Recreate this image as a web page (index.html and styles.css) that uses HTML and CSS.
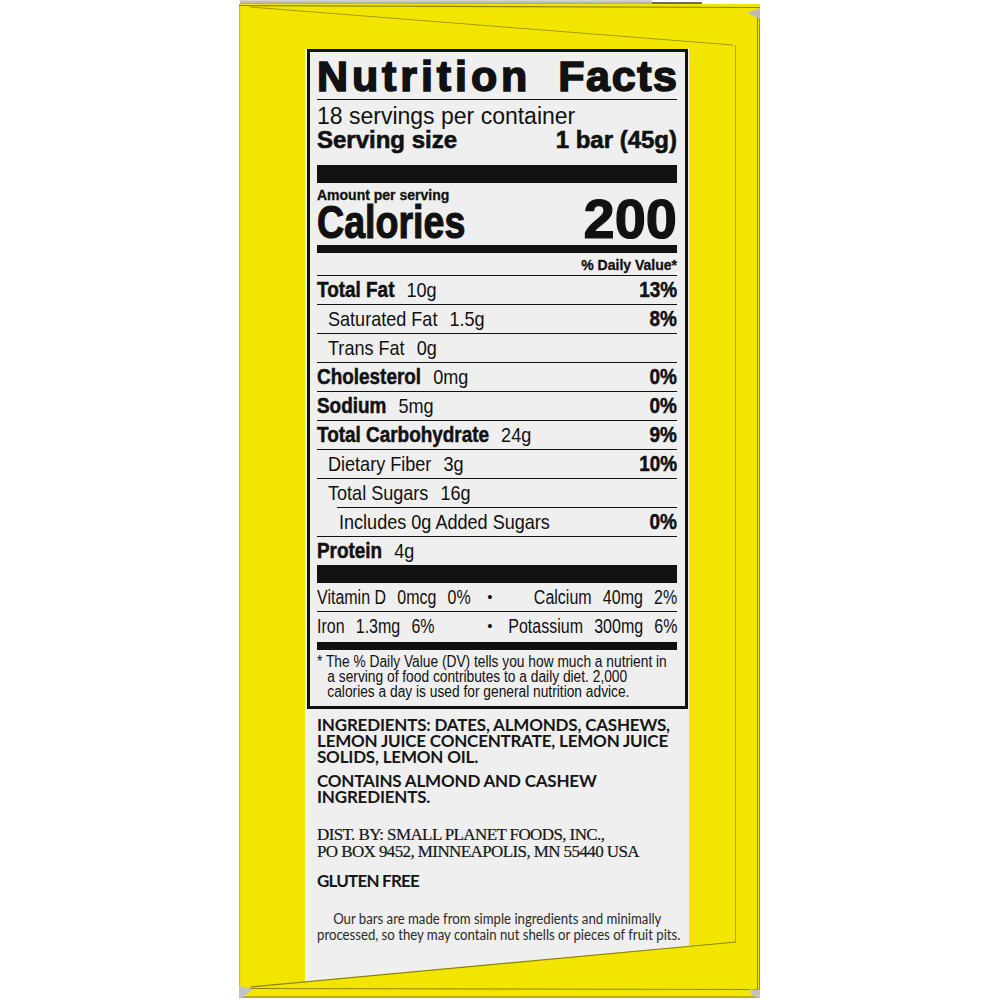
FILE: index.html
```html
<!DOCTYPE html>
<html>
<head>
<meta charset="utf-8">
<link rel="stylesheet" href="styles.css">
</head>
<body>
<div class="stage">
  <div class="lid"><span class="lid-light"></span><span class="lid-dark"></span></div>
  <div class="package">
    <div class="panel">
      <div class="nf">
        <div class="nf-title"><span class="w1">Nutrition</span><span class="w2">Facts</span></div>
        <div class="nf-serv">
          <div class="servings">18 servings per container</div>
          <div class="serving-size"><span>Serving size</span><span>1 bar (45g)</span></div>
        </div>
        <div class="nf-cal">
          <div class="amount">Amount per serving</div>
          <div class="cal-row"><span class="cal-label">Calories</span><span class="cal-num">200</span></div>
        </div>
        <div class="dv-head">% Daily Value*</div>
        <div class="row"><span class="c"><b>Total Fat</b><span class="amt">10g</span></span><b class="c r">13%</b></div>
        <div class="row ind1"><span class="c">Saturated Fat<span class="amt">1.5g</span></span><b class="c r">8%</b></div>
        <div class="row ind1"><span class="c">Trans Fat<span class="amt">0g</span></span></div>
        <div class="row"><span class="c"><b>Cholesterol</b><span class="amt">0mg</span></span><b class="c r">0%</b></div>
        <div class="row"><span class="c"><b>Sodium</b><span class="amt">5mg</span></span><b class="c r">0%</b></div>
        <div class="row"><span class="c"><b>Total Carbohydrate</b><span class="amt">24g</span></span><b class="c r">9%</b></div>
        <div class="row ind1"><span class="c">Dietary Fiber<span class="amt">3g</span></span><b class="c r">10%</b></div>
        <div class="row ind1 sugars"><span class="c">Total Sugars<span class="amt">16g</span></span></div>
        <div class="row ind2"><span class="c">Includes 0g Added Sugars</span><b class="c r">0%</b></div>
        <div class="row protein"><span class="c"><b>Protein</b><span class="amt">4g</span></span></div>
        <div class="bar-thick"></div>
        <div class="vit-row"><div class="cell"><span class="cv">Vitamin D<span class="amt">0mcg</span><span class="amt">0%</span></span></div><span class="dot">•</span><div class="cell vit-r"><span class="cv r">Calcium<span class="amt">40mg</span><span class="amt">2%</span></span></div></div>
        <div class="vit-row last-vit"><div class="cell"><span class="cv">Iron<span class="amt">1.3mg</span><span class="amt">6%</span></span></div><span class="dot">•</span><div class="cell vit-r"><span class="cv r">Potassium<span class="amt">300mg</span><span class="amt">6%</span></span></div></div>
        <div class="bar-mid"></div>
        <div class="foot">* The % Daily Value (DV) tells you how much a nutrient in<br>a serving of food contributes to a daily diet. 2,000<br>calories a day is used for general nutrition advice.</div>
      </div>
      <div class="below">
        <p class="ingr">INGREDIENTS: DATES, ALMONDS, CASHEWS,<br>LEMON JUICE CONCENTRATE, LEMON JUICE<br>SOLIDS, LEMON OIL.</p>
        <p class="ingr contains">CONTAINS ALMOND AND CASHEW<br>INGREDIENTS.</p>
        <p class="dist">DIST. BY: SMALL PLANET FOODS, INC.,<br>PO BOX 9452, MINNEAPOLIS, MN 55440 USA</p>
        <p class="ingr gf">GLUTEN FREE</p>
        <p class="ours">Our bars are made from simple ingredients and minimally<br>processed, so they may contain nut shells or pieces of fruit pits.</p>
      </div>
    </div>
    <svg class="folds" width="521" height="994" viewBox="0 0 521 994">
      <line x1="0.5" y1="0" x2="0.5" y2="994" stroke="#cfc300" stroke-width="1.5"/>
      <line x1="0" y1="1.5" x2="521" y2="3.5" stroke="#8d8500" stroke-width="1.2"/>
      <line x1="11" y1="3" x2="494" y2="41" stroke="#a39a00" stroke-width="1"/>
      <line x1="496.5" y1="41" x2="496.5" y2="938" stroke="#b4aa00" stroke-width="1"/>
      <line x1="11" y1="983" x2="497" y2="938" stroke="#8d8500" stroke-width="1.2"/>
      <line x1="4" y1="984.5" x2="518" y2="985.5" stroke="#8d8500" stroke-width="1"/>
      <line x1="2" y1="993" x2="519" y2="993" stroke="#a79d00" stroke-width="1.5"/>
      <line x1="518.5" y1="8" x2="518.5" y2="993" stroke="#8c8400" stroke-width="1"/>
      <line x1="520.5" y1="8" x2="520.5" y2="993" stroke="#c07a30" stroke-width="1"/>
      <polygon points="0,982 14,985 5,993 0,993" fill="#c3c3c3"/>
      <polygon points="510,985 521,986 521,994 514,992" fill="#c3c3c3"/>
      <polygon points="508,9 521,4 521,15" fill="#bcbcbc"/>
    </svg>
  </div>
</div>
</body>
</html>
```
FILE: styles.css
```css
* { box-sizing: border-box; }
body { margin: 0; background: #fff; }
.stage { width: 1000px; height: 1000px; overflow: hidden; background: #fff; }

.lid { margin-left: 240px; width: 462px; height: 4px; display: flex; }
.lid-light { flex: 0 0 412px; background: linear-gradient(#dcdad4, #a7a39a); }
.lid-dark { flex: 1; background: linear-gradient(transparent 55%, #6e6a60 55%); }

.package {
  position: relative;
  margin-left: 239px;
  width: 521px;
  height: 994px;
  background: #f2e600;
  padding: 45px 0 0 66px;
}
.folds { position: absolute; left: 0; top: 0; pointer-events: none; }

.panel {
  width: 384px;
  height: 933px;
  background: #efefef;
  clip-path: polygon(0 0, 100% 0, 100% 897px, 0 100%);
  padding: 0 1px 0 2px;
}

.nf {
  border: 3px solid #111;
  padding: 0 8px 0 7px;
  color: #111;
  font-family: "Liberation Sans", Arial, sans-serif;
}
.nf-title {
  display: flex;
  justify-content: space-between;
  font: bold 43px/45px "Liberation Sans", Arial, sans-serif;
  -webkit-text-stroke: 1.6px #111;
  padding-top: 2px;
  border-bottom: 1px solid #111;
}
.w1 { letter-spacing: 3.9px; }
.w2 { letter-spacing: 1.6px; margin-right: -1.6px; }

.nf-serv { padding: 4px 0 14px; border-bottom: 18px solid #111; }
.servings { font: 23px/24px "Liberation Sans", Arial, sans-serif; }
.serving-size {
  display: flex;
  justify-content: space-between;
  font: bold 24px/23px "Liberation Sans", Arial, sans-serif;
  -webkit-text-stroke: 0.6px #111;
}

.nf-cal { padding: 4px 0 7px; border-bottom: 8px solid #111; }
.amount { font: bold 14px/16px "Liberation Sans", Arial, sans-serif; -webkit-text-stroke: 0.3px #111; }
.cal-row { display: flex; justify-content: space-between; align-items: baseline; line-height: 32px; }
.cal-label {
  display: inline-block;
  font: bold 47px/32px "Liberation Sans", Arial, sans-serif;
  -webkit-text-stroke: 1.2px #111;
  transform: scaleX(0.8);
  transform-origin: left center;
}
.cal-num { font: bold 56px/32px "Liberation Sans", Arial, sans-serif; -webkit-text-stroke: 1.2px #111; }

.dv-head {
  text-align: right;
  font: bold 14px/20px "Liberation Sans", Arial, sans-serif;
  -webkit-text-stroke: 0.3px #111;
  padding-top: 2px;
  border-bottom: 1px solid #111;
}

.row {
  display: flex;
  justify-content: space-between;
  height: 29px;
  border-bottom: 1px solid #111;
  font: 21px/28px "Liberation Sans", Arial, sans-serif;
  white-space: nowrap;
}
.c { display: inline-block; transform: scaleX(0.86); transform-origin: left center; }
.c.r { transform-origin: right center; }
.row b { font-weight: bold; font-size: 22px; -webkit-text-stroke: 0.5px #111; }
.amt { margin-left: 14px; }
.ind1 { padding-left: 11px; }
.ind2 { padding-left: 22px; }
.sugars {
  border-bottom: none;
  background: linear-gradient(#111, #111) right bottom / calc(100% - 20px) 1px no-repeat;
}
.protein { border-bottom: none; height: 28px; }
.bar-thick { height: 18px; background: #111; }

.vit-row {
  display: grid;
  grid-template-columns: 167px 12px 1fr;
  height: 29px;
  border-bottom: 1px solid #111;
  font: 20px/28px "Liberation Sans", Arial, sans-serif;
  white-space: nowrap;
}
.vit-row.last-vit { border-bottom: none; height: 30px; }
.cell { display: flex; min-width: 0; }
.vit-r { justify-content: flex-end; }
.cv { display: inline-block; flex: none; transform: scaleX(0.8); transform-origin: left center; }
.cv.r { transform-origin: right center; }
.dot { text-align: center; font-size: 15px; }
.bar-mid { height: 8px; background: #111; }

.foot {
  font: 16px/15px "Liberation Sans", Arial, sans-serif;
  padding: 4px 0 7px 12px;
  text-indent: -12px;
  white-space: nowrap;
  transform: scaleX(0.86);
  transform-origin: left center;
}

.below { padding: 0 8px 0 10px; color: #161616; }
.below p { margin: 0; white-space: nowrap; }
.ingr { margin-top: 8px !important; font: bold 17px/16px Lato, "Liberation Sans", sans-serif; letter-spacing: -0.2px; }
.contains { margin-top: 8px !important; }
.dist { margin-top: 21px !important; font: 17px/17px "Liberation Serif", serif; letter-spacing: -0.6px; -webkit-text-stroke: 0.2px #161616; }
.gf { margin-top: 13px !important; letter-spacing: -0.8px; }
.ours {
  margin-top: 21px !important;
  font: 15.5px/16px Lato, "Liberation Sans", sans-serif;
  text-indent: 19px;
  color: #2a2a2a;
  transform: scaleX(0.85);
  transform-origin: left center;
}
```
